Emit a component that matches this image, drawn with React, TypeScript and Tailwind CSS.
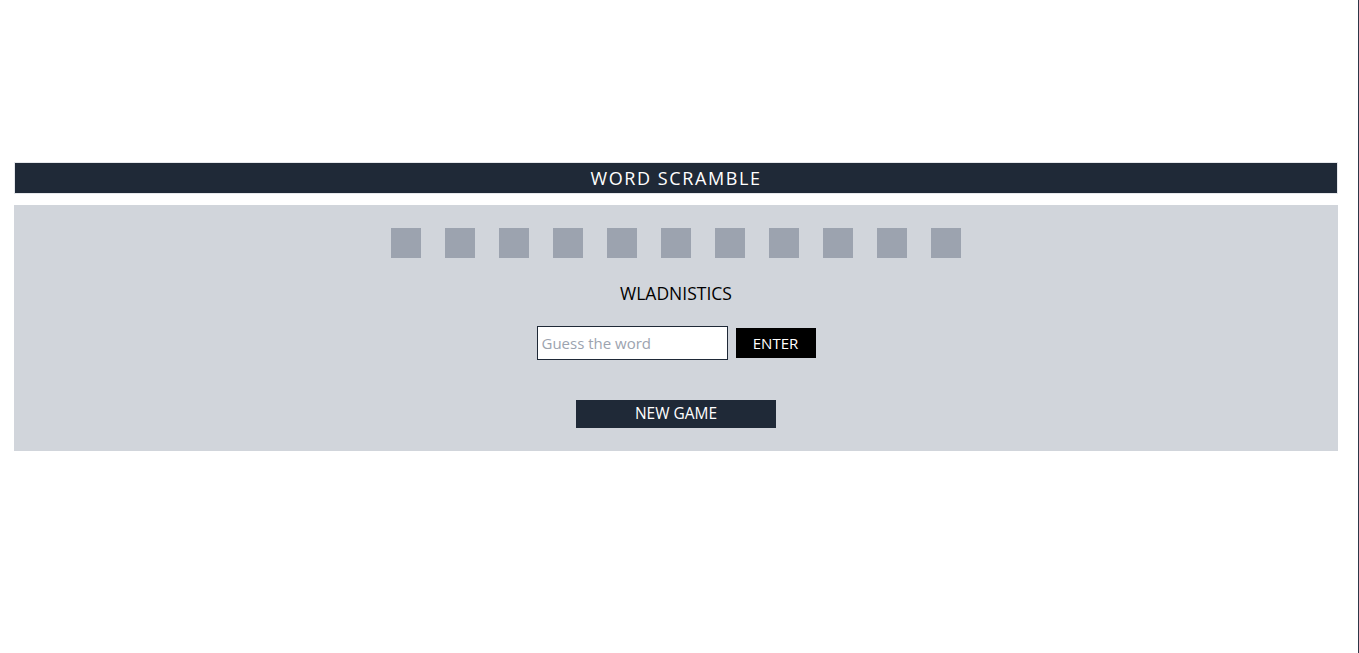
import React from "react";

export default function App() {
  const letters = Array.from({ length: 11 });
  return (
    <div
      className="min-h-screen w-full bg-white border-r border-[#2d3748] pl-[14px] pr-[20px] pt-[162px]"
      style={{ fontFamily: '"Open Sans", "Segoe UI", sans-serif' }}
    >
      <div className="h-[32px] border border-[#e5e7eb] bg-[#1f2937] flex items-center justify-center">
        <h1 className="text-white text-[18px] tracking-[1.6px] leading-none">WORD SCRAMBLE</h1>
      </div>
      <div className="mt-[11px] bg-[#d1d5db] h-[246px] flex flex-col items-center pt-[23px]">
        <div className="flex gap-[24px]">
          {letters.map((_, i) => (
            <div key={i} className="w-[30px] h-[30px] bg-[#9ca3af]" />
          ))}
        </div>
        <div className="mt-[24px] text-[17.5px] leading-[22px] text-black">WLADNISTICS</div>
        <div className="mt-[22px] flex items-center gap-[8px]">
          <input
            type="text"
            placeholder="Guess the word"
            className="w-[191px] h-[34px] bg-white border border-[#1f2937] px-[4px] text-[15px] text-black placeholder:text-[#9ca3af] outline-none"
            style={{ fontFamily: '"Open Sans", "Segoe UI", sans-serif' }}
          />
          <button className="w-[80px] h-[30px] bg-black text-white text-[15px] leading-none">
            ENTER
          </button>
        </div>
        <button className="mt-[40px] w-[200px] h-[28px] bg-[#1f2937] text-white text-[15.5px] leading-none">
          NEW GAME
        </button>
      </div>
    </div>
  );
}
